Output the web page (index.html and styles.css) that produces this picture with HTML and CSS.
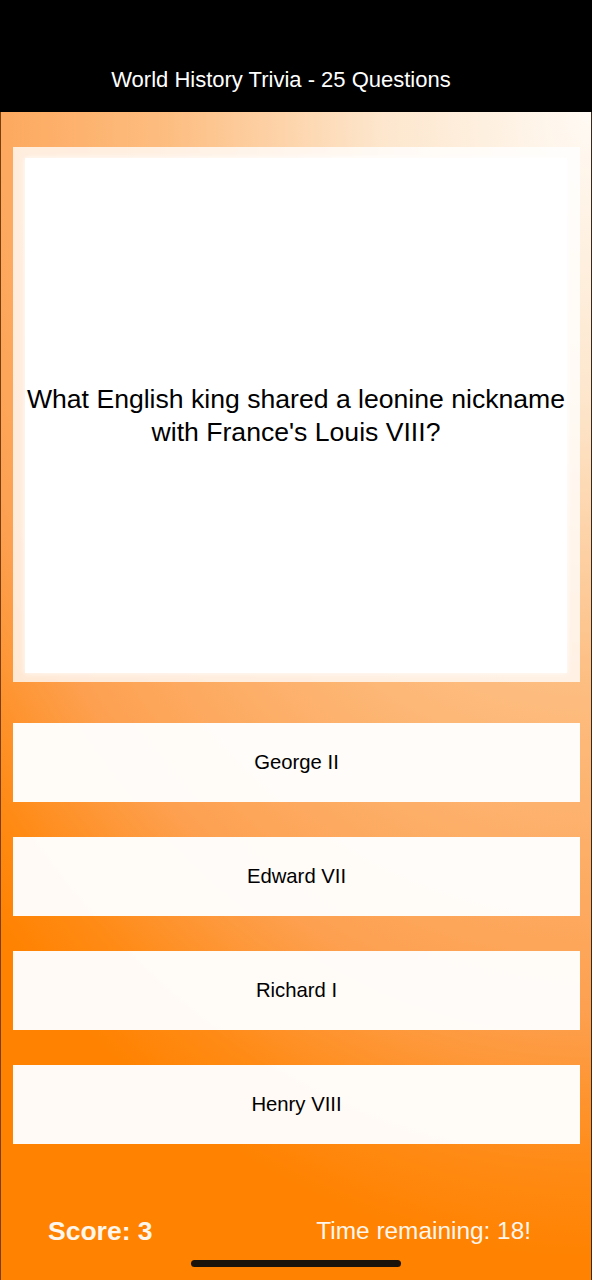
FILE: index.html
```html
<!DOCTYPE html>
<html lang="en">
<head>
<meta charset="utf-8">
<title>World History Trivia</title>
<link rel="stylesheet" href="styles.css">
</head>
<body>
<div class="screen">
  <header class="header">
    <h1 class="title">World History Trivia - 25 Questions</h1>
  </header>
  <main class="main">
    <section class="card">
      <div class="card-inner">
        <p class="question">What English king shared a leonine nickname with France's Louis VIII?</p>
      </div>
    </section>
    <div class="answers">
      <button class="answer">George II</button>
      <button class="answer">Edward VII</button>
      <button class="answer">Richard I</button>
      <button class="answer">Henry VIII</button>
    </div>
    <footer class="footer">
      <span class="score">Score: 3</span>
      <span class="timer">Time remaining: 18!</span>
    </footer>
  </main>
  <div class="home-indicator"></div>
</div>
</body>
</html>
```
FILE: styles.css
```css
* { box-sizing: border-box; }
html, body { margin: 0; padding: 0; }
body {
  width: 592px;
  height: 1280px;
  overflow: hidden;
  font-family: "Liberation Sans", Arial, sans-serif;
  background: #000;
}
.screen {
  position: relative;
  width: 592px;
  height: 1280px;
  display: flex;
  flex-direction: column;
}
.header {
  height: 112px;
  background: #000;
  display: flex;
  justify-content: center;
  padding: 67px 30px 0 0;
}
.title {
  margin: 0;
  font-weight: normal;
  font-size: 22px;
  line-height: 26px;
  color: #ffffff;
}
.main {
  flex: 1;
  display: flex;
  flex-direction: column;
  padding: 35px 11px 0 12px;
  border-left: 1px solid #7a3f0e;
  border-right: 1px solid #3a2a1c;
  background:
    radial-gradient(ellipse 850px 1150px at 100% 0%,
      #fffaf4 0%, #fde6cc 25%, #fdbd80 50%, #fda050 78%, #ff8a14 92%, #ff8200 100%);
  background-color: #ff8200;
}
.card {
  height: 535px;
  background: rgba(255, 255, 255, 0.78);
  padding: 11px 13px 9px 12px;
  margin-bottom: 41px;
}
.card-inner {
  height: 100%;
  background: #ffffff;
  display: flex;
  align-items: center;
  justify-content: center;
  box-shadow: 0 0 6px rgba(255, 255, 255, 0.9);
}
.question {
  margin: 0;
  text-align: center;
  font-size: 26.6px;
  line-height: 33px;
  color: #000;
}
.answers {
  display: flex;
  flex-direction: column;
  gap: 35px;
}
.answer {
  height: 79px;
  border: 0;
  margin: 0;
  padding: 0;
  background: rgba(255, 255, 255, 0.96);
  font-family: "Liberation Sans", Arial, sans-serif;
  font-size: 20.3px;
  color: #000;
  text-align: center;
}
.footer {
  margin-top: 67px;
  height: 40px;
  display: flex;
  align-items: center;
  justify-content: space-between;
  padding: 0 49px 0 35px;
}
.score {
  font-weight: bold;
  font-size: 26.5px;
  color: #fff6ec;
}
.timer {
  font-size: 24.4px;
  color: #fff6ec;
}
.home-indicator {
  position: absolute;
  left: 191px;
  top: 1260px;
  width: 210px;
  height: 7px;
  border-radius: 4px;
  background: #1a130c;
}
```
